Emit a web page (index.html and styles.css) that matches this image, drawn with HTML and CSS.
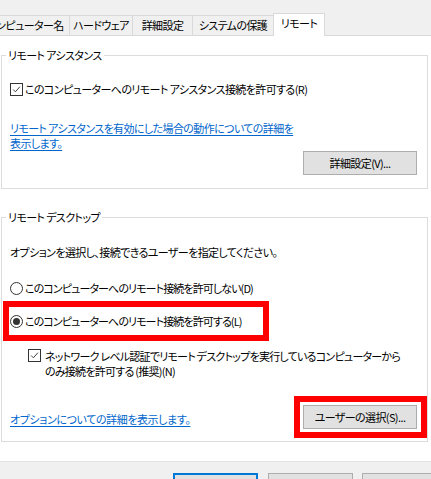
FILE: index.html
```html
<!DOCTYPE html>
<html lang="ja">
<head>
<meta charset="utf-8">
<title>システムのプロパティ - リモート</title>
<link rel="stylesheet" href="styles.css">
</head>
<body>
<div class="window">
  <div class="tabstrip">
    <div class="tab tab-1">コンピューター名</div>
    <div class="tab tab-2">ハードウェア</div>
    <div class="tab tab-3">詳細設定</div>
    <div class="tab tab-4">システムの保護</div>
    <div class="tab tab-active">リモート</div>
  </div>
  <div class="pane">
    <section class="group group-assist">
      <div class="legend">リモート アシスタンス</div>
      <label class="option option-assist">
        <span class="checkbox"><svg viewBox="0 0 13 13" width="13" height="13"><path d="M2.5 6.5 L5.2 9.2 L10.5 3.2" fill="none" stroke="#333" stroke-width="1.1"/></svg></span>
        <span class="option-text">このコンピューターへのリモート アシスタンス接続を許可する(R)</span>
      </label>
      <a class="link link-assist" href="#">リモート アシスタンスを有効にした場合の動作についての詳細を<br>表示します。</a>
      <div class="btn-row"><button class="btn btn-wide">詳細設定(V)...</button></div>
    </section>
    <section class="group group-desktop">
      <div class="legend">リモート デスクトップ</div>
      <p class="desc">オプションを選択し、接続できるユーザーを指定してください。</p>
      <label class="option option-deny">
        <span class="radio"></span>
        <span class="option-text">このコンピューターへのリモート接続を許可しない(D)</span>
      </label>
      <label class="option option-allow">
        <span class="radio radio-on"></span>
        <span class="option-text">このコンピューターへのリモート接続を許可する(L)</span>
      </label>
      <label class="option option-nla">
        <span class="checkbox"><svg viewBox="0 0 13 13" width="13" height="13"><path d="M2.5 6.5 L5.2 9.2 L10.5 3.2" fill="none" stroke="#333" stroke-width="1.1"/></svg></span>
        <span class="option-text">ネットワーク レベル認証でリモート デスクトップを実行しているコンピューターから<br>のみ接続を許可する (推奨)(N)</span>
      </label>
      <div class="link-row">
        <a class="link link-options" href="#">オプションについての詳細を表示します。</a>
        <span class="mark-wrap"><button class="btn btn-wide">ユーザーの選択(S)...</button></span>
      </div>
    </section>
  </div>
  <div class="footer">
    <button class="btn btn-foot btn-default" aria-label="OK"></button>
    <button class="btn btn-foot btn-cancel" aria-label="キャンセル"></button>
    <button class="btn btn-foot btn-apply" aria-label="適用(A)"></button>
  </div>
</div>
</body>
</html>
```
FILE: styles.css
```css
*, *::before, *::after { box-sizing: border-box; }
html, body { margin: 0; padding: 0; overflow: hidden; }
body {
  width: 431px;
  height: 479px;
  background: #f0f0f0;
  font-family: "Noto Sans CJK JP", "Noto Sans", sans-serif;
  font-size: 11px;
  letter-spacing: -0.6px;
  line-height: 15px;
  color: #000;
  font-feature-settings: "palt";
}

/* tabs */
.tabstrip { display: flex; align-items: flex-end; height: 35px; }
.tab {
  flex: none;
  height: 20px;
  border-top: 1px solid #d9d9d9;
  border-left: 1px solid #d9d9d9;
  background: #f0f0f0;
  text-align: center;
  line-height: 18px;
  white-space: nowrap;
  overflow: hidden;
}
.tab-1 { width: 89px; margin-left: -20px; }
.tab-2 { width: 63px; }
.tab-3 { width: 60px; }
.tab-4 { width: 81px; }
.tab-active {
  width: 52px;
  height: 23px;
  margin-bottom: -1px;
  border-right: 1px solid #d9d9d9;
  background: #fff;
  position: relative;
  z-index: 1;
}

/* pane */
.pane {
  background: #fff;
  border-top: 1px solid #d9d9d9;
  border-bottom: 1px solid #e3e3e3;
  padding: 19px 3px 19px 1px;
}
.group { border: 1px solid #dcdcdc; }
.group-assist { padding-bottom: 13px; }
.group-desktop { margin-top: 28px; padding-bottom: 12px; }
.legend {
  width: fit-content;
  margin: -8px 0 0 4px;
  padding: 0 2px;
  background: #fff;
  white-space: nowrap;
}

.option { display: flex; align-items: flex-start; white-space: nowrap; }
.option-assist { margin: 19px 0 0 8px; }
.option-deny { margin: 21px 0 0 8px; }
.option-allow { margin: 18px 0 0 8px; position: relative; }
.option-nla { margin: 20px 0 0 26px; letter-spacing: -0.75px; }
.option-deny .option-text,
.option-allow .option-text { letter-spacing: -0.9px; }

.checkbox {
  flex: none;
  width: 13px;
  height: 13px;
  margin: 1px 2px 0 0;
  border: 1px solid #333;
  background: #fff;
  display: flex;
  align-items: center;
  justify-content: center;
}
.checkbox svg { display: block; width: 11px; height: 11px; }
.option-nla .checkbox { margin: 0 4px 0 0; }

.radio {
  flex: none;
  width: 13px;
  height: 13px;
  margin: 1px 2px 0 0;
  border: 1px solid #333;
  border-radius: 50%;
  background: #fff;
  display: flex;
  align-items: center;
  justify-content: center;
}
.radio-on::before {
  content: "";
  width: 7px;
  height: 7px;
  border-radius: 50%;
  background: #333;
}

/* red annotation boxes */
.option-allow::after {
  content: "";
  position: absolute;
  top: -13px;
  left: -7px;
  width: 266px;
  height: 40px;
  border: 6px solid #f00;
  pointer-events: none;
}
.mark-wrap { display: block; position: relative; }
.mark-wrap::after {
  content: "";
  position: absolute;
  top: -9px;
  left: -9px;
  right: -10px;
  bottom: -9px;
  border: 6px solid #f00;
  pointer-events: none;
}

.link {
  color: #0066cc;
  text-decoration: underline;
  text-underline-offset: 2px;
  white-space: nowrap;
}
.link-assist { display: block; width: fit-content; margin: 24px 0 0 8px; }

.desc { margin: 20px 0 0 8px; white-space: nowrap; }

.btn-row { display: flex; justify-content: flex-end; padding-right: 10px; }
.btn {
  font: inherit;
  font-feature-settings: "palt";
  letter-spacing: inherit;
  color: #000;
  background: #e1e1e1;
  border: 1px solid #adadad;
  height: 24px;
  padding: 0;
  margin: 0;
  line-height: 22px;
  white-space: nowrap;
}
.btn-wide { width: 114px; display: block; }

.link-row {
  display: flex;
  justify-content: space-between;
  align-items: flex-start;
  margin-top: 26px;
  padding: 0 10px 0 8px;
}
.link-options { display: block; margin-top: 7px; letter-spacing: -0.4px; }

/* footer */
.footer {
  display: flex;
  padding: 11px 0 0 173px;
}
.btn-foot { flex: none; width: 85px; height: 24px; }
.btn-default { border: 2px solid #0078d7; }
.btn-cancel { margin-left: 10px; }
.btn-apply { margin-left: 9px; }
```
